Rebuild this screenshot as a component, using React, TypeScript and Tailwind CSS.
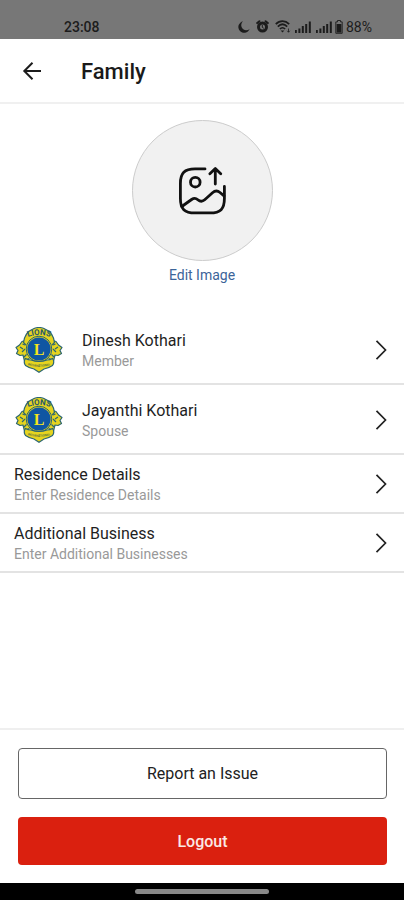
// src/screens/family/FamilyPage.tsx
import React from "react";

const members = [
  { name: "Dinesh Kothari", relation: "Member" },
  { name: "Jayanthi Kothari", relation: "Spouse" },
];

const sections = [
  { title: "Residence Details", hint: "Enter Residence Details" },
  { title: "Additional Business", hint: "Enter Additional Businesses" },
];

const SignalIcon: React.FC = () => (
  <svg className="w-4 h-3" viewBox="0 0 16 12" fill="currentColor" aria-hidden="true">
    <rect x="0" y="9" width="1.8" height="3" />
    <rect x="3.4" y="7.5" width="2" height="4.5" />
    <rect x="6.8" y="5" width="2" height="7" />
    <rect x="10.2" y="3" width="2" height="9" />
    <rect x="13.8" y="0.5" width="2" height="11.5" />
  </svg>
);

const StatusBar: React.FC = () => (
  <div className="h-[39px] shrink-0 flex items-center justify-between pt-[14px] pl-16 pr-8 bg-[#777777] text-[#1c1c1c]">
    <span className="text-sm font-medium">23:08</span>
    <div className="flex items-center">
      <svg className="w-3 h-3 mr-[6px]" viewBox="0 0 12 12" fill="currentColor" aria-hidden="true">
        <path d="M5 0.3A5.8 5.8 0 1 0 11.6 8 4.4 4.4 0 0 1 5 0.3Z" />
      </svg>
      <svg className="w-[13px] h-[13px] mr-[6px]" viewBox="0 0 13 13" fill="none" stroke="currentColor" aria-hidden="true">
        <circle cx="6.5" cy="7" r="4" strokeWidth="3" />
        <path d="M6.3 5v2.3l1.5 1" strokeWidth="1" />
        <path d="M1.2 3L3.4 1.2M11.8 3L9.6 1.2" strokeWidth="2" strokeLinecap="round" />
      </svg>
      <svg className="w-4 h-[13px] mr-1" viewBox="0 0 16 13" fill="none" stroke="currentColor" aria-hidden="true">
        <path d="M0.8 4.2C4.7 0.2 10.3 0.2 14.2 4.2M2.8 6.6C5.7 3.7 9.3 3.7 12.2 6.6M4.9 9C6.5 7.3 8.5 7.3 10.1 9" strokeWidth="1.7" />
        <path d="M5.7 10.4h3.6L7.5 12.5Z" fill="currentColor" stroke="none" />
        <path d="M13.5 8.5v3.7M12.2 10.8l1.3 1.4 1.3-1.4" strokeWidth="0.8" />
      </svg>
      <SignalIcon />
      <span className="w-[5px]" />
      <SignalIcon />
      <svg className="w-2 h-[14px] ml-[3px] mr-[3px]" viewBox="0 0 8 14" aria-hidden="true">
        <path d="M2.5 0.5h3v1.4h1.7v11.4H0.8V1.9h1.7Z" fill="none" stroke="currentColor" strokeWidth="0.9" />
        <rect x="1.6" y="4" width="4.8" height="8.6" fill="currentColor" />
      </svg>
      <span className="text-sm">88%</span>
    </div>
  </div>
);

const LionsEmblem: React.FC = () => (
  <svg className="w-12 h-[46px] shrink-0" viewBox="0 0 48 46" aria-hidden="true">
    {/* Lion heads */}
    <g fill="#e6d41f" stroke="#2c6670" strokeWidth="1.2" strokeLinejoin="round">
      <path d="M12 13L7 14.5 4.5 18 1 20.5 3 23.5 1.5 26.5 5 28.5 8 28 9.5 34 15 31Z" />
      <path d="M36 13L41 14.5 43.5 18 47 20.5 45 23.5 46.5 26.5 43 28.5 40 28 38.5 34 33 31Z" />
    </g>
    <path
      d="M5 20l3 2M7 25l3-3M9 30l3-3M7.5 17l2.5 1M43 20l-3 2M41 25l-3-3M39 30l-3-3M40.5 17l-2.5 1"
      stroke="#2c6670"
      strokeWidth="1.2"
    />
    <path d="M8.5 15.5Q10 5 18 2Q24 -1 30 2Q38 5 39.5 15.5L36 19H12Z" fill="#e6d41f" stroke="#2c6670" strokeWidth="1.2" />
    <circle cx="24" cy="22" r="13.6" fill="#e6d41f" />
    <circle cx="24" cy="22" r="12.8" fill="none" stroke="#2c6670" strokeWidth="1" />
    <circle cx="24" cy="22" r="11.6" fill="#0f56a3" />
    <path id="emblem-arc" d="M9 12Q24 4 39 12" fill="none" />
    <text className="font-bold" fontSize="8" fill="#28596b" textAnchor="middle">
      <textPath href="#emblem-arc" startOffset="50%">LIONS</textPath>
    </text>
    <text x="24" y="28" fontFamily="'Liberation Serif', serif" fontWeight="700" fontSize="16" fill="#f4e51c" textAnchor="middle">
      L
    </text>
    {/* Ribbon */}
    <path
      d="M10.5 31.5Q13 33 16 33Q24 36 32 33Q35 33 37.5 31.5Q40 35 37.5 38.5Q33 41.5 29 42L24 45.2 19 42Q15 41.5 10.5 38.5Q8 35 10.5 31.5Z"
      fill="#e6d41f"
      stroke="#2c6670"
      strokeWidth="1.2"
    />
    <path id="emblem-ribbon" d="M11 37.5Q24 42 37 37.5" fill="none" />
    <text className="font-bold" fontSize="3" fill="#56703f" textAnchor="middle">
      <textPath href="#emblem-ribbon" startOffset="50%">INTERNATIONAL</textPath>
    </text>
  </svg>
);

const Chevron: React.FC = () => (
  <svg className="w-3 h-5 shrink-0" viewBox="0 0 12 20" fill="none" stroke="#222222" strokeWidth="1.7" aria-hidden="true">
    <path d="M1.5 0.8L10.5 10L1.5 19.2" />
  </svg>
);

interface RowProps {
  title: string;
  subtitle: string;
  emblem?: boolean;
}

const Row: React.FC<RowProps> = ({ title, subtitle, emblem }) => (
  <li className="border-b-2 border-[#e3e3e3]">
    <button
      type="button"
      className={
        emblem
          ? "w-full h-[68px] flex items-center pt-px pl-[15px] pr-[17px] text-left"
          : "w-full h-[57px] flex items-center pt-px pl-[14px] pr-[17px] text-left"
      }
    >
      {emblem && <LionsEmblem />}
      <span className={emblem ? "flex-1 pl-[19px] pt-[3px]" : "flex-1 pt-px"}>
        <span className="block text-base leading-5 text-[#1f1f1f]">{title}</span>
        <span className="block text-sm leading-5 text-[#999999]">{subtitle}</span>
      </span>
      <Chevron />
    </button>
  </li>
);

const FamilyPage: React.FC = () => {
  return (
    <div className="min-h-screen flex flex-col bg-white font-[Roboto,sans-serif]">
      <StatusBar />

      {/* Header */}
      <header className="h-[65px] shrink-0 flex items-center pl-5 border-b-2 border-[#f0f0f0]">
        <button type="button" aria-label="Back" className="w-6 h-6">
          <svg className="w-6 h-6" viewBox="0 0 24 24" fill="none" stroke="#1c1c1c" strokeWidth="2" aria-hidden="true">
            <path d="M21 12H4.5M12.5 3.8L4.3 12l8.2 8.2" />
          </svg>
        </button>
        <h1 className="pl-[37px] pt-px text-[22px] font-medium text-[#1a1a1a]">Family</h1>
      </header>

      {/* Photo */}
      <main className="flex-1">
        <div className="flex flex-col items-center pt-4 pb-[30px]">
          <div className="w-[141px] h-[141px] rounded-full border border-[#cccccc] bg-[#f1f1f1] flex items-center justify-center">
            <svg
              className="w-12 h-12"
              viewBox="0 0 48 48"
              fill="none"
              stroke="#111111"
              strokeWidth="2.8"
              strokeLinecap="round"
              strokeLinejoin="round"
              aria-hidden="true"
            >
              <path d="M27 1.9H17C6.5 1.9 2.4 6 2.4 16.5V31.5C2.4 42 6.5 45.9 17 45.9H32C42.5 45.9 46.4 42 46.4 31.5V19.5" />
              <circle cx="17.3" cy="15.2" r="4.8" />
              <path d="M37.3 17V1.9M31.9 6.7L37.3 1.5L42.7 6.7" />
              <path d="M3.8 39.5L13.6 32.5C15.7 31 18 31.1 19.8 32.7C22 34.6 24.5 34.7 26.7 32.8L34.5 25.8C37 23.6 39.5 23.5 42 25.5L46 28.9" />
            </svg>
          </div>
          <button type="button" className="mt-1 text-sm leading-5 text-[#3c6499]">
            Edit Image
          </button>
        </div>

        <ul>
          {members.map((member) => (
            <Row key={member.name} title={member.name} subtitle={member.relation} emblem />
          ))}
          {sections.map((section) => (
            <Row key={section.title} title={section.title} subtitle={section.hint} />
          ))}
        </ul>
      </main>

      {/* Actions */}
      <footer className="flex flex-col gap-[18px] pl-[18px] pr-[17px] pt-[18px] pb-[18px] border-t-2 border-[#efefef]">
        <button type="button" className="h-[51px] rounded border border-[#666666] pt-px text-base text-[#222222]">
          Report an Issue
        </button>
        <button type="button" className="h-12 rounded bg-[#da200f] pt-px text-base font-medium text-[#fbe9e6]">
          Logout
        </button>
      </footer>

      <div className="h-[17px] shrink-0 flex items-center justify-center bg-black">
        <div className="w-1/3 h-[5px] rounded-full bg-[#888888]" />
      </div>
    </div>
  );
};

export default FamilyPage;
